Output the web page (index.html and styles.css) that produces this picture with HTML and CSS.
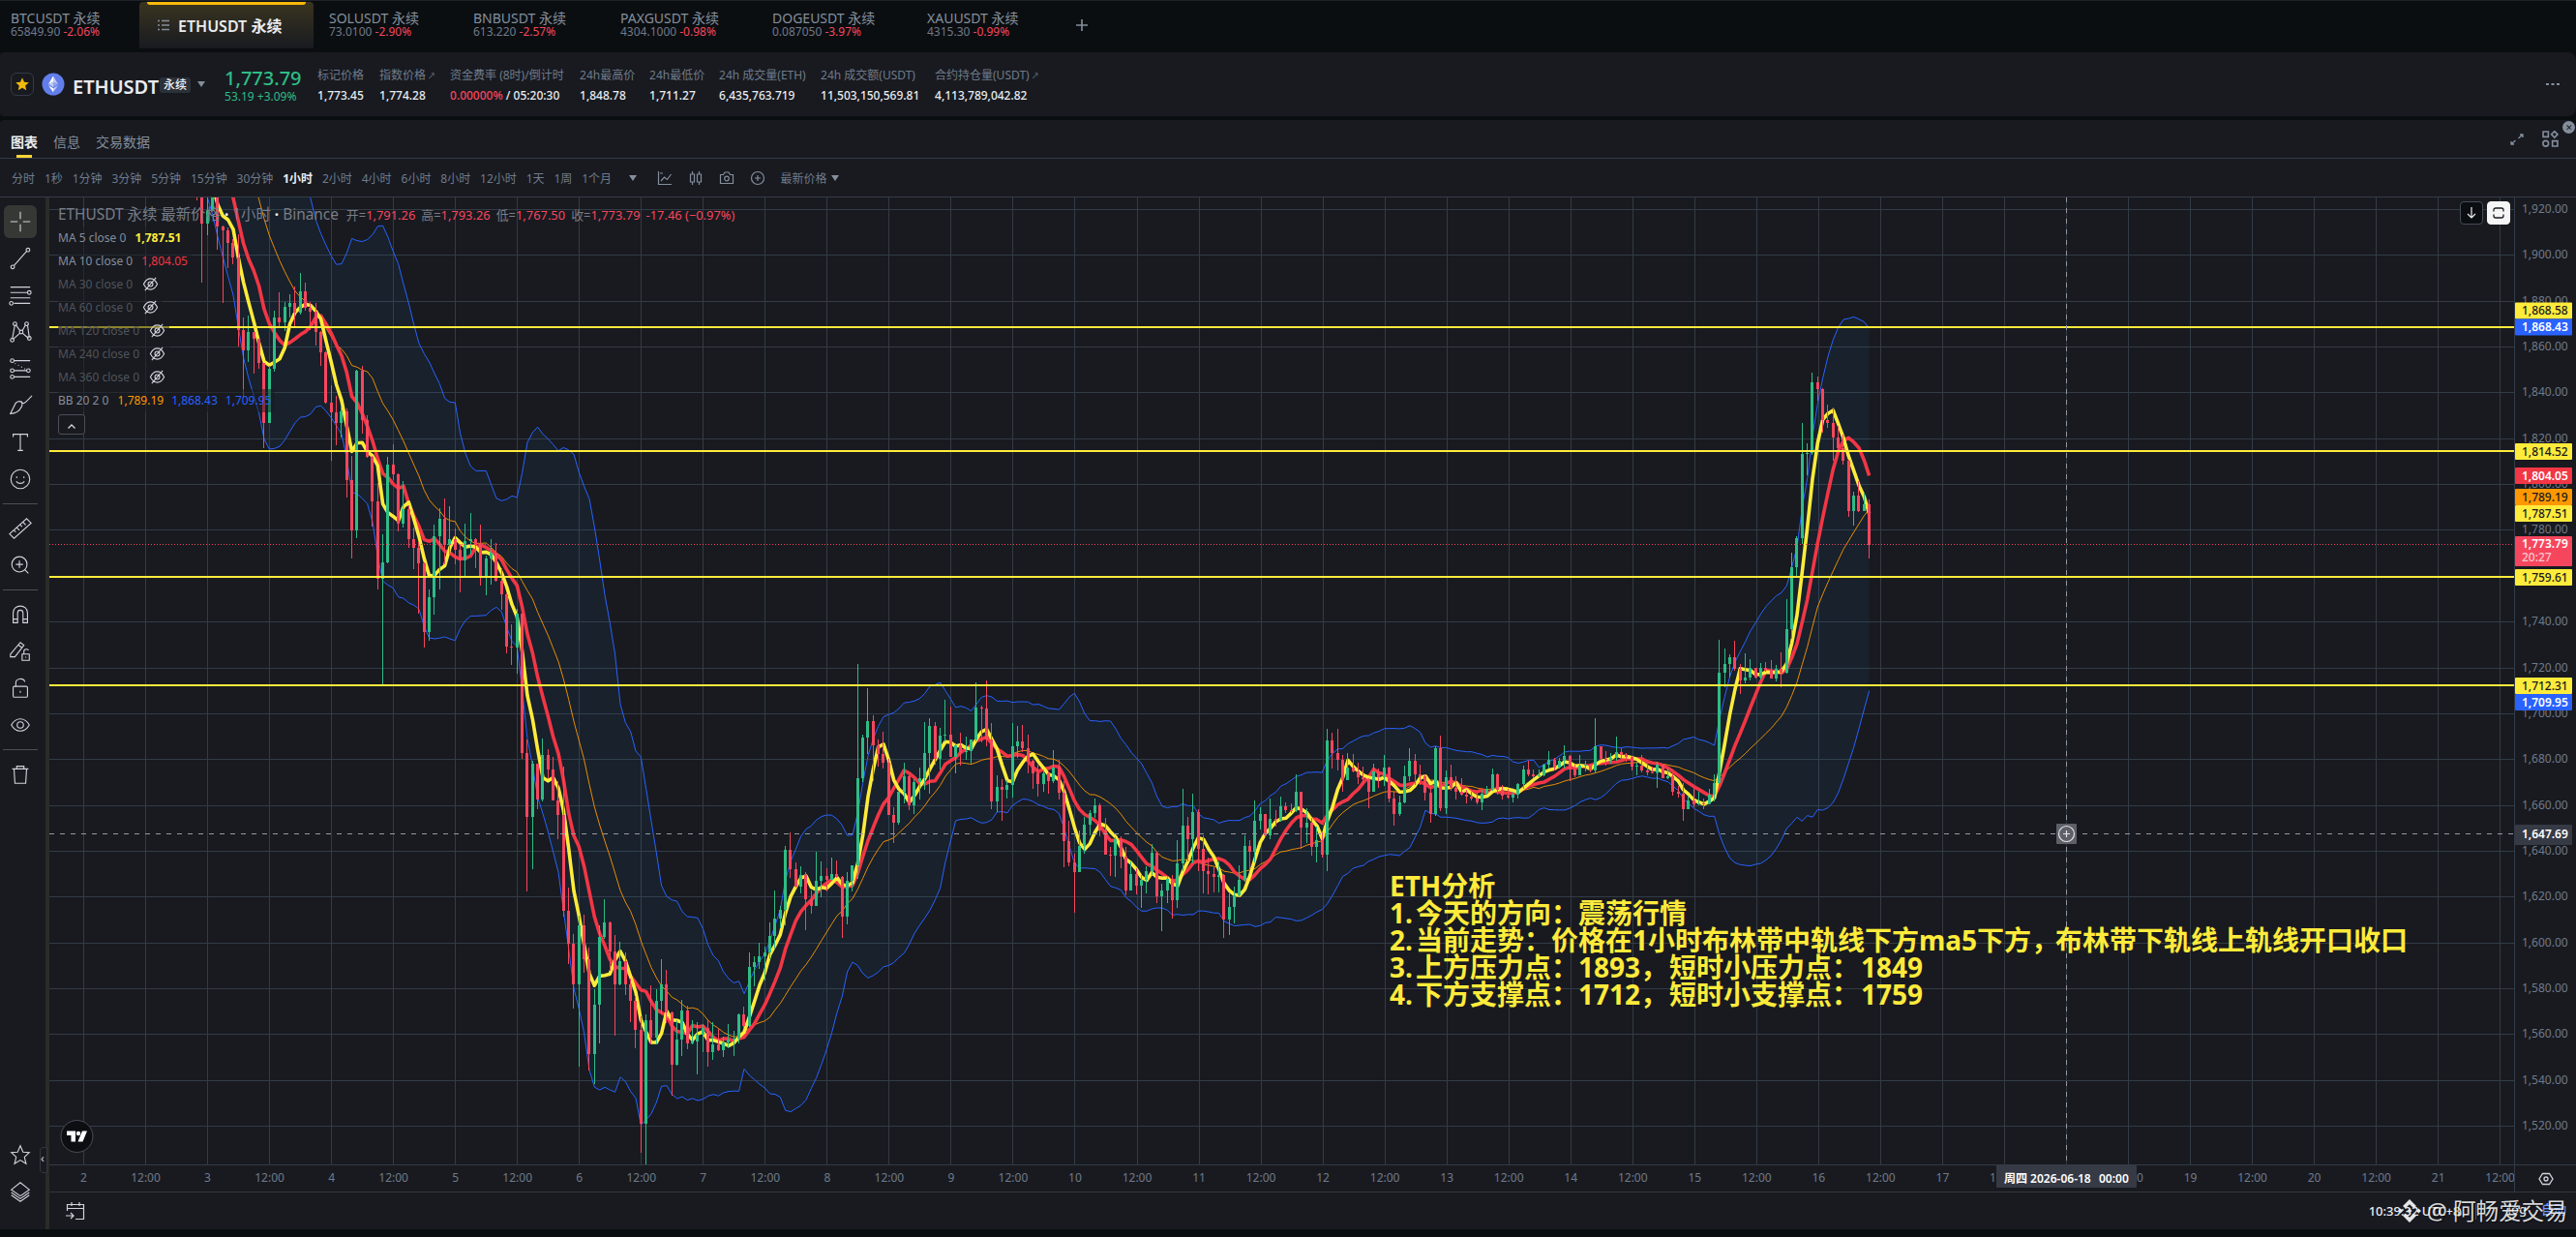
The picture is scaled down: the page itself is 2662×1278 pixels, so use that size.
FILE: index.html
```
<!DOCTYPE html>
<html lang="zh-CN">
<head>
  <meta charset="UTF-8" />
  <meta name="viewport" content="width=device-width, initial-scale=1.0"/>
  <title>ETHUSDT 永续</title>
  <link rel="stylesheet" href="styles.css">
</head>
<body>
  <!-- Symbol tabs -->
  <nav class="symbol-bar">
    <div class="symbol" style="width:133px"><b>BTCUSDT 永续</b><span>65849.90 <i>-2.06%</i></span></div>
    <div class="symbol-active">
      <svg width="12" height="12" viewBox="0 0 12 12"><path d="M0 1.5h2M4 1.5h8M0 6h2M4 6h8M0 10.5h2M4 10.5h8" stroke="#848e9c" stroke-width="1.6"/></svg>
      <span>ETHUSDT 永续</span>
    </div>
    <div class="symbol first" style="width:149px"><b>SOLUSDT 永续</b><span>73.0100 <i>-2.90%</i></span></div>
    <div class="symbol" style="width:152px"><b>BNBUSDT 永续</b><span>613.220 <i>-2.57%</i></span></div>
    <div class="symbol" style="width:157px"><b>PAXGUSDT 永续</b><span>4304.1000 <i>-0.98%</i></span></div>
    <div class="symbol" style="width:160px"><b>DOGEUSDT 永续</b><span>0.087050 <i>-3.97%</i></span></div>
    <div class="symbol" style="width:154px"><b>XAUUSDT 永续</b><span>4315.30 <i>-0.99%</i></span></div>
    <svg class="add-tab" width="12" height="12" viewBox="0 0 12 12"><path d="M6 0v12M0 6h12" stroke="#848e9c" stroke-width="1.6"/></svg>
  </nav>

  <!-- Ticker -->
  <header class="ticker">
    <div class="star-box">
      <svg width="14" height="14" viewBox="0 0 14 14"><path d="M7 .3l2 4.4 4.8.5-3.6 3.2 1 4.8L7 10.8l-4.2 2.4 1-4.8L.2 5.2 5 4.7z" fill="#f0b90b"/></svg>
    </div>
    <svg class="coin" width="24" height="24" viewBox="0 0 24 24">
      <circle cx="12" cy="12" r="11.5" fill="#627eea"/>
      <path d="M12 3.5v6.3l5 2.3z" fill="#c0cbf6"/><path d="M12 3.5l-5 8.6 5-2.3z" fill="#fff"/>
      <path d="M12 16.2v4.1l5-7z" fill="#c0cbf6"/><path d="M12 20.3v-4.1l-5-2.9z" fill="#fff"/>
      <path d="M12 15l5-2.9-5-2.3z" fill="#8fa3f0"/><path d="M7 12.1l5 2.9V9.8z" fill="#c0cbf6"/>
    </svg>
    <h1>ETHUSDT</h1>
    <span class="badge">永续</span>
    <span class="caret"></span>
    <div class="price"><strong>1,773.79</strong><span>53.19 +3.09%</span></div>
    <dl class="stats">
      <div style="width:64px"><dt>标记价格</dt><dd>1,773.45</dd></div>
      <div style="width:73px"><dt>指数价格<sup>↗</sup></dt><dd>1,774.28</dd></div>
      <div style="width:134px"><dt>资金费率 (8时)/倒计时</dt><dd><em>0.00000%</em> / 05:20:30</dd></div>
      <div style="width:72px"><dt>24h最高价</dt><dd>1,848.78</dd></div>
      <div style="width:72px"><dt>24h最低价</dt><dd>1,711.27</dd></div>
      <div style="width:105px"><dt>24h 成交量(ETH)</dt><dd>6,435,763.719</dd></div>
      <div style="width:118px"><dt>24h 成交额(USDT)</dt><dd>11,503,150,569.81</dd></div>
      <div style="width:120px"><dt>合约持仓量(USDT)<sup>↗</sup></dt><dd>4,113,789,042.82</dd></div>
    </dl>
    <svg class="more" width="14" height="4" viewBox="0 0 14 4"><path d="M0 2h3M5.5 2h3M11 2h3" stroke="#848e9c" stroke-width="2"/></svg>
  </header>

  <main class="panel">
    <div class="close-dot">✕</div>
    <div class="panel-tabs">
      <span class="on">图表</span><span>信息</span><span>交易数据</span>
      <div class="panel-tools">
        <svg width="14" height="14" viewBox="0 0 14 14" fill="none" stroke="#848e9c" stroke-width="1.3"><path d="M10 2h3v3M13 2L8.500 6M5.500 8L1 12M1 9v3h3"/></svg>
        <svg width="17" height="17" viewBox="0 0 16 16" fill="none" stroke="#848e9c" stroke-width="1.5"><path d="M1 1h5v5H1zM12 .6l3 3-3 3-3-3zM10 10h5v5h-5z"/><circle cx="3.5" cy="12.5" r="2.7"/></svg>
      </div>
    </div>

    <div class="intervals">
      <span>分时</span><span>1秒</span><span>1分钟</span><span>3分钟</span><span>5分钟</span><span>15分钟</span><span>30分钟</span><span class="on">1小时</span><span>2小时</span><span>4小时</span><span>6小时</span><span>8小时</span><span>12小时</span><span>1天</span><span>1周</span><span>1个月</span>
      <i class="caret more-intervals"></i>
      <svg class="tool-icon" viewBox="0 0 16 16"><path d="M1.5 1v13.500H15M4 11l3.500-4 3 2.500L14.500 4M3 3h3"/></svg>
      <svg class="tool-icon" viewBox="0 0 16 16"><path d="M4.500 1v3M4.500 12v3M2.500 4h4v8h-4zM11.500 1v3M11.500 12v3M9.500 4h4v8h-4z"/></svg>
      <svg class="tool-icon" viewBox="0 0 16 16"><path d="M1.500 4.500h3L6 2h4l1.500 2.500h3v9h-13z"/><circle cx="8" cy="8.500" r="2.300"/></svg>
      <svg class="tool-icon" viewBox="0 0 16 16"><circle cx="8" cy="8" r="6.500"/><path d="M8 5v6M5 8h6"/></svg>
      <span class="price-type">最新价格 <i class="caret"></i></span>
    </div>

    <div class="workspace">
      <aside class="toolbar">
        <div class="tool active"><svg viewBox="0 0 28 28"><path d="M14 3v8M14 17v8M3 14h8M17 14h8"/></svg></div>
        <div class="tool"><svg viewBox="0 0 28 28"><path d="M7 22L21 6"/><circle cx="5.500" cy="23.500" r="2"/><circle cx="22.500" cy="4.500" r="2"/></svg></div>
        <div class="tool"><svg viewBox="0 0 28 28"><path d="M3 5h22M3 11h19M3 17h22M7 23h18"/><circle cx="24" cy="11" r="2"/><circle cx="4" cy="23" r="2"/></svg></div>
        <div class="tool"><svg viewBox="0 0 28 28"><path d="M5 22L8 6M9 6l5 7M6 22l8-7M16 13l4-7M16 15l7 6M22 6l2 14"/><circle cx="8" cy="5" r="2"/><circle cx="21" cy="5" r="2"/><circle cx="15" cy="14" r="2"/><circle cx="5" cy="23" r="2"/><circle cx="24" cy="21" r="2"/></svg></div>
        <div class="tool"><svg viewBox="0 0 28 28"><path d="M7 5h18M7 16h14M7 23h18"/><path d="M8 8l13 7" stroke-dasharray="1 3"/><circle cx="5" cy="5" r="2"/><circle cx="5" cy="16" r="2"/><circle cx="23" cy="16" r="2"/><circle cx="5" cy="23" r="2"/></svg></div>
        <div class="tool"><svg viewBox="0 0 28 28"><path d="M3 23l6-12c5-4 9 0 6 5-3 6-7 7-12 7zM15 9c1 3 3 3 5 1l7-7"/></svg></div>
        <div class="tool"><svg viewBox="0 0 28 28"><path d="M6 8V5h16v3M14 5v18M11 23h6"/></svg></div>
        <div class="tool"><svg viewBox="0 0 28 28"><circle cx="14" cy="14" r="10.500"/><path d="M9.500 16.500c2 3 7 3 9 0M10 11v2M18 11v2"/></svg></div>
        <hr>
        <div class="tool"><svg viewBox="0 0 28 28"><path d="M2 20L21 3l5 5L7 25zM7 16l2 2M10 13l3 3M14 10l2 2M17 7l3 3"/></svg></div>
        <div class="tool"><svg viewBox="0 0 28 28"><circle cx="13" cy="13" r="8.500"/><path d="M9 13h8M13 9v8M19 19l4 4"/></svg></div>
        <hr>
        <div class="tool"><svg viewBox="0 0 28 28"><path d="M6 23V12c0-10 16-10 16 0v11h-5V12c0-4-6-4-6 0v11zM6 19h5M17 19h5"/></svg></div>
        <div class="tool"><svg viewBox="0 0 28 28"><path d="M3 17L14 4l4 3L8 20H3zM12 7l4 3"/><path d="M16 17h8v7h-8zM18 17v-3c0-3 5-3 5-1M20 20v1"/></svg></div>
        <div class="tool"><svg viewBox="0 0 28 28"><rect x="6" y="12" width="16" height="12" rx="1.500"/><path d="M9 12V8c0-5 9-6 10-1M14 17v2"/></svg></div>
        <div class="tool"><svg viewBox="0 0 28 28"><path d="M4 14c5-9 15-9 20 0-5 9-15 9-20 0z"/><circle cx="14" cy="14" r="3.500"/></svg></div>
        <hr>
        <div class="tool"><svg viewBox="0 0 28 28"><path d="M5 8h18M10 8V5h8v3M7 8l1 16h12l1-16"/></svg></div>
        <div class="tool push"><svg viewBox="0 0 28 28"><path d="M14 4l3 7 7 .600-5.400 5 1.800 7.400-6.400-4-6.400 4 1.800-7.400L4 11.600l7-.600z"/></svg></div>
        <div class="tool"><svg viewBox="0 0 28 28"><path d="M14 4l10 8-10 7-10-7zM4 15l10 7 10-7M4 18l10 7 10-7"/></svg></div>
      </aside>
      <div class="fold">‹</div>

      <section class="chart">
        <div class="chart-row">
          <svg id="plot" width="2547" height="999" viewBox="51 204 2547 999"></svg>
          <svg id="price-axis" width="64" height="999" viewBox="2598 204 64 999"></svg>
        </div>
        <div class="chart-row time-row">
          <svg id="time-axis" width="2547" height="28" viewBox="51 1203 2547 28"></svg>
          <div class="axis-settings"><svg width="16" height="14" viewBox="0 0 16 14" fill="none" stroke="#d1d4dc" stroke-width="1.300"><path d="M4.500 1.500h7L15 7l-3.500 5.500h-7L1 7z"/><circle cx="8" cy="7" r="2"/></svg></div>
        </div>
        <div class="chart-footer">
          <svg width="20" height="20" viewBox="0 0 20 20" fill="none" stroke="#d1d4dc" stroke-width="1.200"><path d="M1.500 10V3.500h17V18.500H10M1.500 7.500h17M6 1v4M14 1v4M0 15h8M5 12l3 3-3 3"/></svg>
          <div class="clock"><span>10:39:32 UTC+8</span><span class="log">log</span><span class="auto">自动</span></div>
        </div>

        <div class="legend">
          <div class="legend-title">ETHUSDT 永续 最新价格 <u>·</u> 1小时 <u>·</u> Binance
            <span>开=<i>1,791.26</i></span><span>高=<i>1,793.26</i></span><span>低=<i>1,767.50</i></span><span>收=<i>1,773.79</i></span><span><i>-17.46 (−0.97%)</i></span>
          </div>
          <div class="study">MA 5 close 0 <b class="yellow">1,787.51</b></div>
          <div class="study">MA 10 close 0 <span class="red">1,804.05</span></div>
          <div class="study off">MA 30 close 0 <svg class="eye" viewBox="0 0 18 18"><use href="#eye-off"/></svg></div>
          <div class="study off">MA 60 close 0 <svg class="eye" viewBox="0 0 18 18"><use href="#eye-off"/></svg></div>
          <div class="study off">MA 120 close 0 <svg class="eye" viewBox="0 0 18 18"><use href="#eye-off"/></svg></div>
          <div class="study off">MA 240 close 0 <svg class="eye" viewBox="0 0 18 18"><use href="#eye-off"/></svg></div>
          <div class="study off">MA 360 close 0 <svg class="eye" viewBox="0 0 18 18"><use href="#eye-off"/></svg></div>
          <div class="study">BB 20 2 0 <span class="orange">1,789.19</span><span class="blue">1,868.43</span><span class="blue">1,709.95</span></div>
          <button class="collapse"><svg width="8" height="5" viewBox="0 0 8 5"><path d="M.500 4.500L4 1l3.500 3.500" fill="none" stroke="#d1d4dc" stroke-width="1.300"/></svg></button>
        </div>

        <div class="chart-buttons">
          <button><svg width="12" height="12" viewBox="0 0 12 12" fill="none" stroke="#eaecef" stroke-width="1.200"><path d="M6 0v11M2 7l4 4 4-4"/></svg></button>
          <button class="light"><svg width="12" height="12" viewBox="0 0 12 12" fill="none" stroke="#181a20" stroke-width="1.300"><path d="M1 4.500V3q0-2 2-2h6q2 0 2 2v1.500M1 7.500V9q0 2 2 2h6q2 0 2-2V7.500"/></svg></button>
        </div>
      </section>
    </div>

    <div class="watermark">
      <svg width="24" height="24" viewBox="0 0 24 24" fill="#e4e5e7"><path d="M12 0l7 7-2.600 2.600L12 5.200 7.600 9.600 5 7zM2.600 9.400L5.200 12l-2.600 2.600L0 12zM12 9.400l2.600 2.600-2.600 2.600L9.400 12zM21.400 9.400L24 12l-2.600 2.600-2.600-2.600zM7.600 14.400l4.400 4.400 4.400-4.400L19 17l-7 7-7-7z"/></svg>
      <span>@ 阿畅爱交易</span>
    </div>
  </main>

  <svg width="0" height="0" class="defs">
    <symbol id="eye-off" viewBox="0 0 18 18"><path d="M1.500 9c4-8 11-8 15 0-4 8-11 8-15 0zM3 16L15 2" fill="none" stroke="#d1d4dc" stroke-width="1.200"/><circle cx="9" cy="9" r="2.600" fill="none" stroke="#d1d4dc" stroke-width="1.200"/></symbol>
  </svg>

  <script src="script.js"></script>
</body>
</html>
```
FILE: styles.css
```
* {
  margin: 0;
  padding: 0;
  box-sizing: border-box;
}

body {
  width: 2662px;
  height: 1278px;
  overflow: hidden;
  background-color: #0b0e11;
  color: #848e9c;
  font-family: 'Noto Sans', 'Noto Sans CJK SC', sans-serif;
  font-size: 12px;
}

i, em {
  font-style: normal;
}

.defs {
  position: absolute;
}

/* symbol tabs */
.symbol-bar {
  display: flex;
  height: 54px;
  border-top: 1px solid #1e2329;
}

.symbol {
  flex: none;
  padding: 10px 0 0 11px;
  line-height: 14px;
  white-space: nowrap;
}

.symbol.first {
  margin-left: 5px;
}

.symbol b {
  display: block;
  font-size: 14px;
  font-weight: normal;
  line-height: 15px;
}

.symbol span {
  display: block;
  color: #707a8a;
}

.symbol i {
  color: #f6465d;
}

.symbol-active {
  position: relative;
  display: flex;
  align-items: center;
  gap: 9px;
  width: 180px;
  height: 48px;
  margin: 1px 0 0 11px;
  padding-left: 19px;
  border-radius: 4px 4px 0 0;
  background: linear-gradient(#3a3520, #181a20);
  color: #eaecef;
  font-size: 16px;
  font-weight: 600;
  white-space: nowrap;
}

.symbol-active::before {
  content: '';
  position: absolute;
  left: 8px;
  right: 8px;
  top: 0;
  height: 3px;
  border-radius: 0 0 3px 3px;
  background-color: #fcb90b;
}

.add-tab {
  margin: 19px 0 0 11px;
}

/* ticker */
.ticker {
  display: flex;
  align-items: center;
  height: 66px;
  padding: 0 17px 0 11px;
  border-radius: 4px 8px 8px 4px;
  background-color: #181a20;
  white-space: nowrap;
}

.star-box {
  display: flex;
  align-items: center;
  justify-content: center;
  width: 24px;
  height: 24px;
  border: 1px solid #333b47;
  border-radius: 6px;
}

.coin {
  margin-left: 8px;
}

.ticker h1 {
  width: 90px;
  margin: 4px 0 0 8px;
  color: #eaecef;
  font-size: 20px;
  font-weight: 600;
}

.badge {
  margin-top: 2px;
  padding: 0 4px;
  border-radius: 3px;
  background-color: #2b3139;
  color: #eaecef;
  font-weight: 500;
  line-height: 16px;
}

.caret {
  display: inline-block;
  border: 4px solid transparent;
  border-top: 6px solid #848e9c;
  border-bottom: 0;
}

.ticker .caret {
  margin-left: 7px;
}

.price {
  width: 96px;
  margin-left: 20px;
  padding-top: 6px;
  color: #2ebd85;
}

.price strong {
  display: block;
  font-size: 20px;
  font-weight: 500;
  line-height: 20px;
}

.price span {
  display: block;
  line-height: 18px;
}

.stats {
  display: flex;
  padding-top: 3px;
}

.stats div {
  flex: none;
}

.stats dt {
  margin-bottom: 5px;
  color: #707a8a;
  line-height: 16px;
}

.stats dd {
  color: #eaecef;
  font-weight: 500;
  line-height: 16px;
}

.stats em {
  color: #f6465d;
}

.stats sup {
  margin-left: 2px;
  font-size: 8px;
  line-height: 1;
  vertical-align: 1px;
}

.more {
  margin-left: auto;
}

/* chart panel */
.panel {
  position: relative;
  height: 1146px;
  margin-top: 4px;
  border-radius: 4px 8px 0 0;
  background-color: #181a20;
}

.close-dot {
  position: absolute;
  right: 1px;
  top: 1px;
  width: 13px;
  height: 13px;
  border-radius: 50%;
  background-color: #848e9c;
  color: #181a20;
  font-size: 9px;
  line-height: 13px;
  text-align: center;
}

.panel-tabs {
  display: flex;
  gap: 16px;
  height: 40px;
  padding: 0 18px 0 11px;
  border-bottom: 1px solid #333b47;
  font-size: 14px;
  line-height: 45px;
}

.panel-tabs .on {
  position: relative;
  color: #eaecef;
  font-weight: bold;
}

.panel-tabs .on::after {
  content: '';
  position: absolute;
  left: 6px;
  bottom: 0;
  width: 16px;
  height: 3px;
  background-color: #fcd535;
}

.panel-tools {
  display: flex;
  align-items: center;
  gap: 19px;
  margin-left: auto;
}

.intervals {
  display: flex;
  align-items: center;
  gap: 9.9px;
  height: 39px;
  padding: 1px 0 0 12px;
  color: #707a8a;
  white-space: nowrap;
}

.intervals .on {
  color: #eaecef;
  font-weight: bold;
}

.more-intervals {
  margin: 0 11px 0 8px;
}

.tool-icon {
  width: 16px;
  height: 16px;
  margin-right: 6px;
  fill: none;
  stroke: #848e9c;
  stroke-width: 1.2;
}

.price-type .caret {
  margin-left: 1px;
  vertical-align: 2px;
}

.workspace {
  position: relative;
  display: flex;
  height: 1067px;
  border-top: 1px solid #333b47;
}

/* drawing tools */
.toolbar {
  display: flex;
  flex-direction: column;
  align-items: center;
  width: 51px;
  padding: 6px 6px 20px 0;
  border-right: 4px solid #2b2b27;
}

.tool {
  flex: none;
  display: flex;
  align-items: center;
  justify-content: center;
  width: 34px;
  height: 34px;
  margin: 2px 0;
  border-radius: 6px;
}

.tool.active {
  background-color: #363835;
}

.tool svg {
  width: 26px;
  height: 26px;
  fill: none;
  stroke: #d1d4dc;
  stroke-width: 1.2;
}

.tool.push {
  margin-top: auto;
}

.toolbar hr {
  flex: none;
  width: 36px;
  margin: 6px 0;
  border: 0;
  border-top: 1px solid #4a4e56;
}

.fold {
  position: absolute;
  left: 41px;
  top: 981px;
  width: 8px;
  height: 27px;
  border: 1px solid #33363c;
  border-radius: 4px 0 0 4px;
  background-color: #181a20;
  color: #d1d4dc;
  font-size: 12px;
  line-height: 22px;
}

/* chart area */
.chart {
  position: relative;
  flex: 1;
}

.chart-row {
  display: flex;
}

.chart-row svg {
  display: block;
  flex: none;
}

#plot text,
#price-axis text,
#time-axis text {
  font-size: 12px;
}

#plot .note {
  font-size: 28px;
  font-weight: bold;
  fill: #ffeb3b;
}

.time-row {
  border-bottom: 1px solid #33363a;
}

.axis-settings {
  display: flex;
  align-items: center;
  justify-content: center;
  width: 64px;
  border-top: 1px solid #333b47;
  border-left: 1px solid #333b47;
}

.chart-footer {
  display: flex;
  align-items: center;
  justify-content: space-between;
  height: 38px;
  padding: 0 10px 0 17px;
}

.clock {
  display: flex;
  color: #eaecef;
  font-size: 13px;
  font-weight: 500;
}

.clock .log {
  margin-left: 16px;
  padding-left: 32px;
  border-left: 1px solid #4a4e56;
  line-height: 14px;
}

.clock .auto {
  margin-left: 15px;
  color: #6f9bff;
  line-height: 14px;
}

/* legend over the plot */
.legend {
  position: absolute;
  left: 9px;
  top: 6px;
  white-space: nowrap;
}

.legend-title {
  height: 24px;
  color: #787d87;
  font-size: 15.4px;
  line-height: 24px;
}

.legend-title u {
  color: #eaecef;
  font-weight: bold;
  text-decoration: none;
}

.legend-title span {
  margin-left: 4px;
  font-size: 12.9px;
}

.legend-title span + span {
  margin-left: 6px;
}

.legend-title i {
  color: #f6465d;
}

.study {
  width: max-content;
  height: 24px;
  padding-right: 4px;
  background-color: rgba(24, 26, 32, 0.5);
  line-height: 24px;
}

.study.off {
  color: #50535a;
}

.study b,
.study span {
  margin-left: 6px;
}

.study span + span {
  margin-left: 8px;
}

.yellow { color: #ffeb3b; }
.red { color: #f23645; }
.orange { color: #ff9800; }
.blue { color: #2962ff; }

.eye {
  width: 17px;
  height: 17px;
  margin-left: 7px;
  vertical-align: -4px;
}

.collapse {
  display: block;
  width: 28px;
  height: 21px;
  margin-top: 2px;
  border: 1px solid #4a4e56;
  border-radius: 3px;
  background-color: #181a20;
}

.collapse svg {
  margin: 0 auto;
}

.chart-buttons {
  position: absolute;
  top: 4px;
  right: 68px;
  display: flex;
  gap: 4px;
}

.chart-buttons button {
  display: flex;
  align-items: center;
  justify-content: center;
  width: 24px;
  height: 24px;
  border: 1px solid #474d57;
  border-radius: 4px;
  background-color: #0b0e11;
}

.chart-buttons .light {
  border-color: #f5f5f5;
  background-color: #f5f5f5;
}

.watermark {
  position: absolute;
  right: 9px;
  bottom: 2px;
  display: flex;
  align-items: center;
  gap: 6px;
  color: rgba(255, 255, 255, 0.85);
  font-size: 23.6px;
  line-height: 34px;
  text-shadow: 1px 1px 1px rgba(0, 0, 0, 0.6);
}
```
FILE: script.js
```
// hourly candles from 2 June 22:00, as y positions: close,high,low (open = previous close)
const raw = `180,150,207 231,190,292 217,195,243 195,190,218 234,194,258 238,233,313 251,235,277 266,247,273
341,242,358 362,328,411 343,326,374 350,343,386 375,350,381 437,375,463 381,378,437 328,321,384
333,302,337 317,312,342 313,304,328 323,296,337 301,282,325 318,292,321 322,312,341 343,313,357
364,342,378 416,363,417 426,398,476 437,409,460 425,420,452 496,422,514 548,471,577 383,382,556
434,378,448 472,429,473 518,471,544 598,499,609 581,552,707 480,472,582 490,459,496 541,489,549
526,497,545 557,522,566 566,545,588 582,560,634 653,581,669 617,609,662 554,542,635 536,525,609
563,515,583 557,523,573 568,546,583 579,562,612 559,541,596 557,530,573 563,556,587 596,542,605
577,574,615 571,557,604 600,561,601 614,587,630 668,613,675 669,645,687 634,629,696 778,634,784
844,764,921 789,786,898 826,789,836 780,763,828 795,774,804 827,782,827 842,807,867 941,792,947
975,917,996 1017,965,1042 956,946,1102 991,945,1005 1089,979,1106 1038,1022,1120 968,956,1078 953,929,970
983,952,1003 1017,966,1070 993,973,1018 1017,984,1028 1034,1011,1056 1064,1029,1083 1161,1050,1191 1054,1048,1203
1072,1018,1079 1034,1022,1079 1017,991,1047 1046,1002,1057 1100,1045,1132 1074,1054,1101 1044,1033,1091 1078,1039,1084
1076,1054,1079 1069,1056,1110 1062,1058,1087 1087,1054,1102 1079,1056,1095 1085,1063,1086 1077,1071,1092 1074,1058,1083
1073,1065,1091 1048,1047,1078 1060,1040,1062 999,984,1061 994,988,1019 988,974,1001 984,978,1013 967,953,991
949,920,980 940,936,959 878,874,956 898,860,907 916,891,917 904,895,923 929,901,961 936,920,944
910,880,936 905,890,927 909,897,921 903,886,909 906,889,907 947,905,969 910,901,955 894,894,921
804,686,908 762,759,808 745,711,779 770,739,807 779,764,792 788,756,794 842,784,842 850,834,871
818,818,852 802,788,830 832,801,837 808,805,841 804,793,826 778,746,816 750,742,820 784,746,790
760,752,795 759,723,766 782,730,782 770,768,799 777,757,791 776,761,785 764,764,789 731,705,766
732,729,767 764,703,771 828,747,836 813,801,839 816,805,848 811,806,825 771,747,824 766,750,783
773,749,777 786,759,799 799,785,815 810,790,823 799,795,818 807,797,820 793,775,809 819,785,826
869,807,896 891,848,895 901,882,943 874,858,901 852,844,882 840,837,863 832,825,845 858,830,864
883,845,883 884,875,905 867,865,906 885,864,897 920,875,925 903,890,920 915,897,924 909,904,938
900,895,923 881,872,904 926,880,933 920,913,962 908,905,933 930,904,949 892,868,938 853,815,900
867,844,890 839,820,892 877,836,900 900,863,923 903,886,924 906,896,922 904,890,922 950,903,969
937,923,966 925,916,954 909,894,926 874,863,911 880,868,898 848,827,891 841,834,857 863,841,865
846,825,867 847,837,854 833,823,849 837,829,840 837.5,830,840 818,800,839 855,818,877 850,835,871
875,845,884 868,854,891 883,860,886 765,753,900 778,757,794 785,753,796 806,780,818 793,778,806
797,779,798 803,788,810 805,792,811 818,804,835 797,789,818 803,794,814 793,780,812 825,792,829
841,818,853 829,822,843 802,791,830 786,773,807 800,779,811 802,790,811 819,800,827 841,814,850
773,771,843 835,760,838 803,796,841 814,790,817 818,802,826 821,804,822 823,816,830 825,818,827
829,819,831 820,816,837 815,812,821 800,794,817 816,799,821 822,811,826 824,815,825 821,818,829
810,809,825 795,791,815 800,786,802 802,795,804 801,795,803 790,789,802 785,776,794 793,783,796
786,783,794 781,770,794 795,780,807 801,790,803 791,780,801 790,786,797 796,789,798 771,742,799
784,771,785 785,776,791 783,778,789 777,761,786 780,773,784 782,778,787 792,781,796 791,788,801
796,780,798 798,789,801 798.5,792,799 790,787,814 804,790,804 802,794,805 818,799,822 820,812,824
836,809,848 827,822,836 831,814,834 830,818,832 830.5,825,836 821,815,831 809,800,828 695,661,810
686,670,710 679,676,700 691,662,693 703,686,717 700,675,706 690,681,703 700,690,701 690,685,702
692,684,694 701,682,701 691,687,704 695,674,710 650,619,696 586,571,660 556,554,596 469,437,562
468,458,491 395,385,470 402,389,414 434,401,447 437,418,442 452,421,476 463,440,465 476,449,480
528,475,534 512,508,543 528,497,529 521,510,528 563,516,577`;

const candles = raw.trim().split(/\s+/).map(s => s.split(',').map(Number));
// closes before the first candle in view, for the moving averages
const before = [20, 20, 20, 20, 20, 20, 20, 20, 20, 20, 30, 45, 60, 75, 90, 105, 130];
const closes = before.concat(candles.map(c => c[0]));
const xAt = i => 214.3 + (i - 2) * 5.3333;

function windowOf(i, n) {
  const end = i + before.length + 1;
  return closes.slice(Math.max(0, end - n), end);
}
function mean(list) {
  return list.reduce((a, b) => a + b, 0) / list.length;
}
function line(values) {
  return values.map((y, i) => (i ? 'L' : 'M') + xAt(i).toFixed(1) + ' ' + y.toFixed(1)).join('');
}

const ma5 = candles.map((c, i) => mean(windowOf(i, 5)));
const ma10 = candles.map((c, i) => mean(windowOf(i, 10)));
const mid = candles.map((c, i) => mean(windowOf(i, 20)));
const dev = candles.map((c, i) => 2 * Math.sqrt(mean(windowOf(i, 20).map(v => (v - mid[i]) ** 2))));
const upper = mid.map((m, i) => m - dev[i]);
const lower = mid.map((m, i) => m + dev[i]);

let svg = '';

// grid
for (let k = 0; k < 40; k++) {
  svg += `<rect x="${Math.round(86 + k * 64.03)}" y="204" width="1" height="999" fill="#333b45"/>`;
}
for (let k = 0; k < 21; k++) {
  svg += `<rect x="51" y="${Math.round(216 + k * 47.35)}" width="2547" height="1" fill="#333b45"/>`;
}

// bollinger bands
const back = lower.map((y, i) => `L${xAt(i).toFixed(1)} ${y.toFixed(1)}`).reverse().join('');
svg += `<path d="${line(upper)}${back}Z" fill="#2196f3" fill-opacity="0.06"/>`;
svg += `<path d="${line(mid)}" fill="none" stroke="#ff9800" stroke-opacity="0.9"/>`;
svg += `<path d="${line(upper)}" fill="none" stroke="#2962ff"/>`;
svg += `<path d="${line(lower)}" fill="none" stroke="#2962ff"/>`;

// moving averages
svg += `<path d="${line(ma10)}" fill="none" stroke="#f23645" stroke-width="3.6" stroke-linejoin="round"/>`;
svg += `<path d="${line(ma5)}" fill="none" stroke="#ffeb3b" stroke-width="3.6" stroke-linejoin="round"/>`;

// candles
candles.forEach(([close, high, low], i) => {
  const open = i ? candles[i - 1][0] : 150;
  const color = close <= open ? '#2ebd85' : '#f6465d';
  const x = Math.round(xAt(i) - 0.5);
  const top = Math.min(open, close);
  svg += `<path d="M${x + 0.5} ${high}V${low}" stroke="${color}"/>`;
  svg += `<rect x="${x - 1}" y="${top}" width="3" height="${Math.max(1, Math.abs(open - close))}" fill="${color}"/>`;
});

// last price, levels, crosshair
svg += '<path d="M51 562.5H2598" stroke="#f6465d" stroke-dasharray="1 2"/>';
[338, 466, 596, 708].forEach(y => {
  svg += `<path d="M51 ${y}H2598" stroke="#ffeb3b" stroke-width="2"/>`;
});
svg += '<path d="M51 861.5H2598M2135.500 204V1203" stroke="#9598a1" stroke-dasharray="5 6"/>';
svg += '<rect x="2125" y="851" width="21" height="21" rx="1" fill="#5d6068"/>';
svg += '<g fill="none" stroke="#e4e5e7" stroke-width="1.200"><circle cx="2135.500" cy="861.500" r="8"/><path d="M2132 861.500h7M2135.500 858v7"/></g>';

// analysis note
['ETH分析',
 '1.<tspan dx="3">今</tspan>天的方向：震荡行情',
 '2.<tspan dx="3">当</tspan>前走势：价格在1小时布林带中轨线下方ma5下方，<tspan dx="-3">布</tspan>林带下轨线上轨线开口收口',
 '3.<tspan dx="3">上</tspan>方压力点：1893，<tspan dx="2">短</tspan>时小压力点：<tspan dx="2">1</tspan>849',
 '4.<tspan dx="3">下</tspan>方支撑点：1712，<tspan dx="2">短</tspan>时小支撑点：<tspan dx="2">1</tspan>759'].forEach((t, i) => {
  svg += `<text class="note" x="1436" y="${926 + i * 28}">${t}</text>`;
});

// chart logo
svg += '<circle cx="79.500" cy="1174" r="16.500" fill="#0c0e12" stroke="#4a4e56"/>';
svg += '<path d="M69 1168.500h9v11h-4.500v-6.500H69zM85 1168.500h5l-4.500 11h-5z" fill="#fff"/><circle cx="81" cy="1171" r="2.200" fill="#fff"/>';
document.getElementById('plot').innerHTML = svg;

// price axis
let axis = '<rect x="2598" y="204" width="1" height="999" fill="#333b47"/>';
for (let p = 1920, k = 0; p >= 1520; p -= 20, k++) {
  axis += `<text x="2606" y="${220 + k * 47.35}" fill="#707a8a">1,${p - 1000}.00</text>`;
}
[['1,868.58', 321, '#ffeb3b', '#181a20'], ['1,868.43', 338, '#2962ff', '#fff'],
 ['1,814.52', 466.5, '#ffeb3b', '#181a20'], ['1,804.05', 491.5, '#f23645', '#fff'],
 ['1,789.19', 513.5, '#ff9800', '#181a20'], ['1,787.51', 530.5, '#ffeb3b', '#181a20'],
 ['1,759.61', 596.5, '#ffeb3b', '#181a20'], ['1,712.31', 708.5, '#ffeb3b', '#181a20'],
 ['1,709.95', 725.5, '#2962ff', '#fff']].forEach(([t, y, bg, fg]) => {
  axis += `<rect x="2599" y="${y - 8.5}" width="59" height="17" rx="1" fill="${bg}"/>`;
  axis += `<text x="2606" y="${y + 4}" fill="${fg}" font-weight="${fg === '#fff' ? 600 : 500}">${t}</text>`;
});
axis += '<rect x="2599" y="554" width="59" height="31" rx="1" fill="#f6465d"/>';
axis += '<text x="2606" y="566" fill="#fff" font-weight="600">1,773.79</text><text x="2606" y="580" fill="#fcc8ce" font-weight="500">20:27</text>';
axis += '<rect x="2599" y="852" width="59" height="21" rx="1" fill="#363a45"/><text x="2606" y="866" fill="#fff" font-weight="600">1,647.69</text>';
document.getElementById('price-axis').innerHTML = axis;

// time axis
let time = '<rect x="51" y="1203" width="2547" height="1" fill="#333b47"/>';
for (let k = 0; k < 40; k++) {
  // 18 June lies under the crosshair date
  if (k === 32) continue;
  time += `<text x="${86.5 + k * 64.03}" y="1221" text-anchor="middle" fill="#707a8a">${k % 2 ? '12:00' : 2 + k / 2}</text>`;
}
time += '<rect x="2063" y="1203" width="145" height="24" rx="1" fill="#363a45"/>';
time += '<text x="2071" y="1222" fill="#fff" font-weight="600">周四 2026-06-18</text><text x="2169" y="1222" fill="#fff" font-weight="600">00:00</text>';
document.getElementById('time-axis').innerHTML = time;
```
